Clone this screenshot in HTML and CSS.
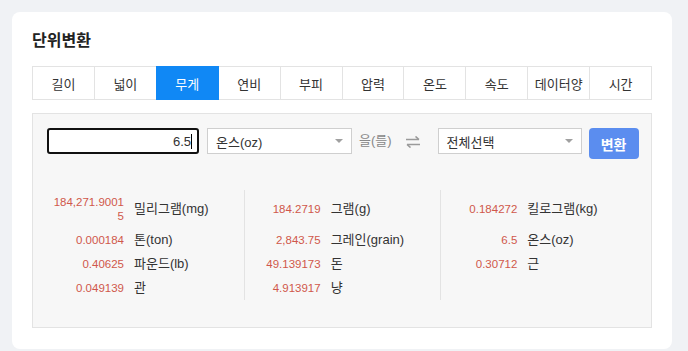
FILE: index.html
```html
<!DOCTYPE html>
<html lang="ko">
<head>
<meta charset="utf-8">
<title>단위변환</title>
<link rel="stylesheet" href="styles.css">
</head>
<body>
<div class="card">
  <h2 class="title">단위변환</h2>
  <div class="tabs">
    <div class="tab">길이</div>
    <div class="tab">넓이</div>
    <div class="tab active">무게</div>
    <div class="tab">연비</div>
    <div class="tab">부피</div>
    <div class="tab">압력</div>
    <div class="tab">온도</div>
    <div class="tab">속도</div>
    <div class="tab">데이터양</div>
    <div class="tab">시간</div>
  </div>
  <div class="panel">
    <div class="controls">
      <div class="num-input"><span class="num-text">6.5</span><span class="caret"></span></div>
      <div class="select sel-from"><span>온스(oz)</span><span class="arrow"></span></div>
      <span class="josa">을(를)</span>
      <svg class="swap" width="16" height="12" viewBox="0 0 16 12">
        <path d="M1 3.5H14M10.5 0.5L14 3.5" fill="none" stroke="#9a9a9a" stroke-width="1.6"/>
        <path d="M15 8.5H2M5.5 11.5L2 8.5" fill="none" stroke="#9a9a9a" stroke-width="1.6"/>
      </svg>
      <div class="select sel-to"><span>전체선택</span><span class="arrow"></span></div>
      <button class="btn">변환</button>
    </div>
    <div class="results">
      <div class="val">184,271.90015</div><div class="lbl">밀리그램(mg)</div>
      <div class="val sep">184.2719</div><div class="lbl">그램(g)</div>
      <div class="val sep">0.184272</div><div class="lbl">킬로그램(kg)</div>

      <div class="val">0.000184</div><div class="lbl">톤(ton)</div>
      <div class="val sep">2,843.75</div><div class="lbl">그레인(grain)</div>
      <div class="val sep">6.5</div><div class="lbl">온스(oz)</div>

      <div class="val">0.40625</div><div class="lbl">파운드(lb)</div>
      <div class="val sep">49.139173</div><div class="lbl">돈</div>
      <div class="val sep">0.30712</div><div class="lbl">근</div>

      <div class="val">0.049139</div><div class="lbl">관</div>
      <div class="val sep">4.913917</div><div class="lbl">냥</div>
      <div class="val sep"></div><div class="lbl"></div>
    </div>
  </div>
</div>
</body>
</html>
```
FILE: styles.css
```css
* { box-sizing: border-box; }
html, body { margin: 0; }
body {
  background: #f0f2f5;
  padding: 12px 16px 0 12px;
  font-family: "Liberation Sans", "Noto Sans CJK KR", sans-serif;
  color: #333;
}
.card {
  width: 660px;
  background: #fff;
  border-radius: 8px;
  padding: 20px 20px 21px;
}
.title {
  margin: 0;
  font-size: 16px;
  line-height: 18px;
  font-weight: bold;
  color: #222;
}
.tabs {
  display: flex;
  margin-top: 16px;
  border-left: 1px solid #e3e3e3;
}
.tab {
  flex: 1 1 0;
  min-width: 0;
  height: 34px;
  display: flex;
  align-items: center;
  justify-content: center;
  white-space: nowrap;
  font-size: 13px;
  color: #333;
  border: 1px solid #e3e3e3;
  border-left: none;
}
.tab.active {
  background: #1088f5;
  border-color: #1088f5;
  box-shadow: -1px 0 0 #1088f5;
  color: #fff;
}
.panel {
  margin-top: 13px;
  background: #f7f7f7;
  border: 1px solid #e3e3e3;
  padding: 14px 14px 27px;
}
.controls {
  display: flex;
  align-items: flex-start;
}
.controls > * { flex-shrink: 0; }
.num-input {
  width: 152px;
  height: 26px;
  border: 2px solid #111;
  border-radius: 3px;
  background: #fff;
  display: flex;
  align-items: center;
  justify-content: flex-end;
  padding-right: 5px;
  font-size: 13px;
  color: #333;
}
.caret {
  width: 1px;
  height: 15px;
  background: #000;
}
.select {
  height: 26px;
  background: #fff;
  border: 1px solid #cfcfcf;
  display: flex;
  align-items: center;
  justify-content: space-between;
  padding: 0 8px;
  font-size: 13px;
  color: #333;
  white-space: nowrap;
}
.sel-from { width: 145px; margin-left: 8px; }
.sel-to { width: 144px; margin-left: 17px; }
.arrow {
  width: 0;
  height: 0;
  border-left: 4px solid transparent;
  border-right: 4px solid transparent;
  border-top: 4px solid #a0a0a0;
}
.josa {
  margin-left: 7px;
  font-size: 13px;
  line-height: 26px;
  color: #888;
  white-space: nowrap;
}
.swap {
  margin-left: 13px;
  margin-top: 8px;
}
.btn {
  margin-left: 7px;
  width: 50px;
  height: 31px;
  border: none;
  border-radius: 4px;
  background: #5b8def;
  color: #fff;
  font-family: inherit;
  font-size: 14px;
  font-weight: bold;
  padding: 0;
}
.results {
  margin-top: 31px;
  display: grid;
  grid-template-columns: 77px 1fr 77px 1fr 77px 1fr;
}
.val {
  display: flex;
  align-items: center;
  justify-content: flex-end;
  text-align: right;
  padding: 5px 0 5px 4px;
  font-size: 11.5px;
  line-height: 14px;
  color: #d0574b;
  word-break: break-all;
}
.val.sep {
  border-left: 1px solid #e3e3e3;
  padding-left: 3px;
}
.lbl {
  display: flex;
  align-items: center;
  padding: 5px 0 5px 10px;
  font-size: 13px;
  line-height: 14px;
  color: #333;
}
```
